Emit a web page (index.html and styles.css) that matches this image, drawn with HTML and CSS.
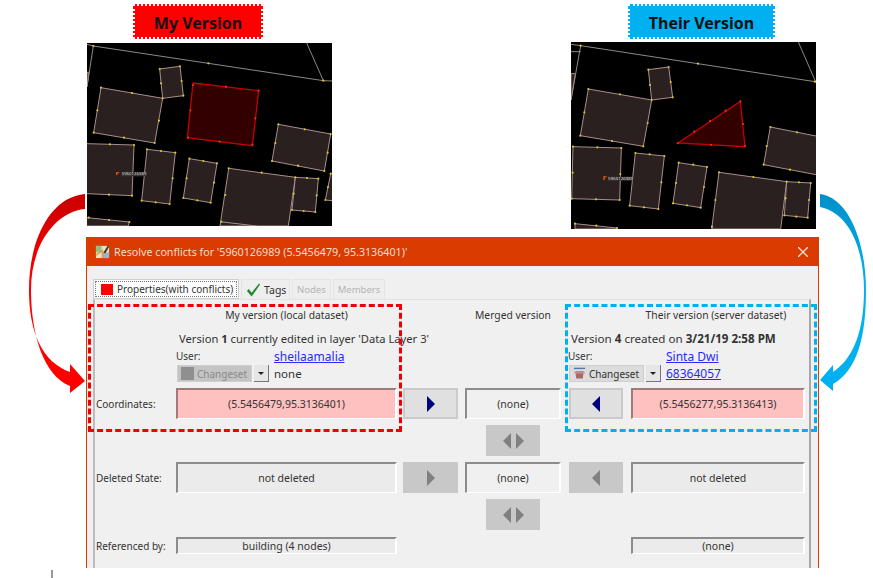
FILE: index.html
```html
<!DOCTYPE html>
<html lang="en">
<head>
<meta charset="UTF-8">
<title>Resolve conflicts</title>
<link rel="stylesheet" href="styles.css">
</head>
<body>

<div class="slide">
  <div class="tag tag-mine">My Version</div>
  <div class="tag tag-their">Their Version</div>

  <svg class="map map-mine" viewBox="21 129 735 549">
    <rect x="21" y="129" width="735" height="549" fill="#000"/>
    <path class="road" d="M21 133L40 138L730 242L756 243M680 129L730 242M40 138L21 260"/>
    <path class="bld" d="M21 217L27 217L21 260Z"/>
    <path class="bld" d="M239 207L300 199L310 287L248 295Z"/>
    <path class="bld" d="M63 263L248 295L224 429L41 398Z"/>
    <path class="bld" d="M595 373L752 402L733 513L576 483Z"/>
    <path class="bld" d="M21 431L162 435L156 587L21 581"/>
    <path class="bld" d="M201 448L286 458L269 612L185 602Z"/>
    <path class="bld" d="M328 476L411 490L392 608L310 594Z"/>
    <path class="bld" d="M446 505L646 532L625 678L420 678Z"/>
    <path class="bld" d="M420 665L530 678"/>
    <path class="bld" d="M646 532L715 536L706 636L636 630Z"/>
    <path class="bld" d="M756 521L752 521L736 600L756 602"/>
    <path class="bld" d="M21 653L148 666L145 678L21 678"/>
    <path class="sel" d="M339 249L536 272L517 437L322 413Z"/>
    <path class="dots" d="M40 138h0M385 190h0M730 242h0M239 207h0M300 199h0M310 287h0M243 250h0M305 243h0M248 295h0M63 263h0M156 279h0M237 362h0M224 429h0M132 413h0M41 398h0M52 331h0M595 373h0M674 388h0M752 402h0M743 458h0M733 513h0M654 497h0M576 483h0M586 429h0M162 435h0M90 433h0M156 587h0M87 584h0M201 448h0M243 453h0M286 458h0M278 535h0M269 612h0M227 607h0M185 602h0M328 476h0M370 483h0M411 490h0M402 548h0M392 608h0M352 601h0M310 594h0M320 535h0M446 505h0M545 518h0M646 532h0M436 585h0M424 665h0M681 534h0M715 536h0M710 586h0M706 636h0M671 633h0M636 630h0M641 581h0M752 521h0M744 561h0M736 600h0M26 653h0M87 660h0M148 666h0"/>
    <path class="dots-red" d="M339 255h0M438 260h0M536 272h0M526 355h0M517 434h0M419 425h0M324 413h0M331 331h0"/>
    <path class="pin" d="M108 517h10v3h-6v5h-4z"/>
    <rect class="pin-bg" x="124" y="517" width="76" height="12"/>
    <text class="map-label" x="125" y="526">5960126989</text>
  </svg>

  <svg class="map map-their" viewBox="33 126 735 561">
    <rect x="33" y="126" width="735" height="561" fill="#000"/>
    <path class="road" d="M33 133L62 137L765 245M715 126L768 248M62 137L33 300M33 155L62 155"/>
    <path class="bld" d="M33 221L46 221L33 300Z"/>
    <path class="bld" d="M265 209L326 201L338 292L275 300Z"/>
    <path class="bld" d="M85 267L275 300L250 439L61 407Z"/>
    <path class="bld" d="M768 408L631 381L611 494L768 524"/>
    <path class="bld" d="M39 440L184 444L179 600L35 596Z"/>
    <path class="bld" d="M226 459L313 468L295 627L209 617Z"/>
    <path class="bld" d="M356 488L441 501L422 623L339 610Z"/>
    <path class="bld" d="M477 517L680 545L662 687L455 687Z"/>
    <path class="bld" d="M680 545L752 549L743 653L673 646Z"/>
    <path class="bld" d="M45 671L171 684L171 687L45 687Z"/>
    <path class="sel" d="M541 304L555 440L354 429Z"/>
    <path class="dots" d="M62 137h0M414 191h0M765 245h0M265 209h0M326 201h0M332 246h0M338 292h0M275 300h0M270 255h0M85 267h0M180 283h0M263 369h0M250 439h0M156 423h0M61 407h0M73 337h0M631 381h0M711 397h0M620 438h0M611 494h0M690 509h0M39 440h0M112 442h0M184 444h0M181 522h0M179 600h0M108 598h0M35 596h0M38 518h0M226 459h0M269 463h0M313 468h0M304 547h0M295 627h0M252 622h0M209 617h0M356 488h0M400 494h0M441 501h0M432 561h0M422 623h0M381 616h0M339 610h0M348 549h0M477 517h0M580 531h0M680 545h0M466 600h0M456 680h0M717 547h0M752 549h0M747 600h0M743 653h0M709 650h0M673 646h0M677 595h0M45 671h0M109 677h0M171 684h0"/>
    <path class="dots-red" d="M541 304h0M549 372h0M555 438h0M453 435h0M354 429h0M403 395h0M450 363h0M497 332h0"/>
    <path class="pin" d="M130 529h10v3h-6v8h-4z"/>
    <rect class="pin-bg" x="144" y="530" width="74" height="12"/>
    <text class="map-label" x="145" y="539">5960126989</text>
  </svg>

  <div class="window">
    <div class="titlebar">
      <svg class="app-icon" viewBox="0 0 16 16">
        <rect x="1" y="2" width="14" height="13" fill="#e8e0c8"/>
        <path d="M1 2h6v7H1z" fill="#8fc08a"/>
        <path d="M7 9h8v6H7z" fill="#8fb8e0"/>
        <path d="M1 12L8 7L9 15" fill="none" stroke="#e8a030" stroke-width="1.5"/>
        <path d="M14 1L9 9L11 10L15 3z" fill="#4a3020"/>
      </svg>
      <span class="title-text">Resolve conflicts for '5960126989 (5.5456479, 95.3136401)'</span>
      <svg class="close-icon" viewBox="0 0 10 10"><path d="M0 0L10 10M10 0L0 10"/></svg>
    </div>

    <div class="tabs">
      <div class="tab tab-active"><div class="tab-inner"><span class="red-square"></span>Properties(with conflicts)</div></div>
      <div class="tab tab-tags">
        <svg class="check" viewBox="0 0 16 14"><path d="M1 8L3 6L6 10L14 0L15 1L6 14Z"/></svg>
        Tags
      </div>
      <div class="tab tab-off">Nodes</div>
      <div class="tab tab-off">Members</div>
    </div>

    <div class="pane">
      <div class="head col-mine">My version (local dataset)</div>
      <div class="head col-merged">Merged version</div>
      <div class="head head-their">Their version (server dataset)</div>

      <div class="version version-mine">Version <b>1</b> currently edited in layer 'Data Layer 3'</div>
      <div class="version version-their">Version <b>4</b> created on <b>3/21/19 2:58 PM</b></div>

      <div class="user user-mine">
        <div class="user-label">User:</div>
        <a class="link link-top" href="#">sheilaamalia</a>
        <div class="combo">
          <span class="combo-btn combo-off"><span class="cs-box"></span>Changeset</span>
          <span class="combo-arrow"></span>
        </div>
        <span class="plain">none</span>
      </div>
      <div class="user user-their">
        <div class="user-label">User:</div>
        <a class="link link-top" href="#">Sinta Dwi</a>
        <div class="combo">
          <span class="combo-btn">
            <svg class="cs-icon" viewBox="0 0 14 14">
              <path d="M1 1.5h12" stroke="#4a78b8" stroke-width="1.5"/>
              <path d="M2.5 4.5h9l-1 8h-7z" fill="#a86868"/>
              <path d="M1.5 5h11v2h-11z" fill="#c89090"/>
            </svg>
            Changeset
          </span>
          <span class="combo-arrow"></span>
        </div>
        <a class="link" href="#">68364057</a>
      </div>

      <div class="label row-coord">Coordinates:</div>
      <div class="field conflict col-mine row-coord">(5.5456479,95.3136401)</div>
      <div class="btn col-b1 row-coord"><span class="tri tri-r"></span></div>
      <div class="field empty col-merged row-coord">(none)</div>
      <div class="btn col-b2 row-coord"><span class="tri tri-l"></span></div>
      <div class="field conflict col-their row-coord">(5.5456277,95.3136413)</div>

      <div class="btn btn-off btn-both col-merged row-both1"><span class="tri tri-l"></span><span class="tri tri-r"></span></div>

      <div class="label row-del">Deleted State:</div>
      <div class="field col-mine row-del">not deleted</div>
      <div class="btn btn-off col-b1 row-del"><span class="tri tri-r"></span></div>
      <div class="field empty col-merged row-del">(none)</div>
      <div class="btn btn-off col-b2 row-del"><span class="tri tri-l"></span></div>
      <div class="field col-their row-del">not deleted</div>

      <div class="btn btn-off btn-both col-merged row-both2"><span class="tri tri-l"></span><span class="tri tri-r"></span></div>

      <div class="label row-ref">Referenced by:</div>
      <div class="field col-mine row-ref">building (4 nodes)</div>
      <div class="field col-their row-ref">(none)</div>
    </div>
  </div>

  <div class="dash dash-mine"></div>
  <div class="dash dash-their"></div>

  <svg class="arrows" viewBox="0 0 873 578">
    <defs>
      <linearGradient id="red-fade" x1="0" y1="0" x2="0" y2="1">
        <stop offset="0" stop-color="#c80000"/>
        <stop offset="0.45" stop-color="#ff0000"/>
      </linearGradient>
      <linearGradient id="blue-fade" x1="0" y1="0" x2="0" y2="1">
        <stop offset="0" stop-color="#0090c8"/>
        <stop offset="0.45" stop-color="#00b0f0"/>
      </linearGradient>
    </defs>
    <path fill="url(#red-fade)" d="M85 194C50 197 29 240 29 290C29 332 42 362 70 372L70 364L85 381L70 393L70 386C44 376 31 335 31 290C31 245 55 212 85 209Z"/>
    <path fill="url(#blue-fade)" d="M820 194C850 198 866 245 866 290C866 335 858 370 833 384L833 391L820 380L833 365L833 372C854 358 864 330 864 290C864 250 850 213 820 207Z"/>
    <path d="M52 570V578" stroke="#333" stroke-width="1"/>
  </svg>
</div>

</body>
</html>
```

FILE: styles.css
```css
* {
  box-sizing: border-box;
}
html, body {
  margin: 0;
  padding: 0;
  background-color: #fff;
}
body {
  font-family: "Noto Sans", sans-serif;
  font-size: 10.5px;
  color: #333;
}
.slide {
  position: relative;
  width: 873px;
  height: 578px;
  overflow: hidden;
}

/* annotation labels */
.tag {
  position: absolute;
  top: 4px;
  height: 35px;
  padding-top: 3px;
  border: 2px dotted #fff;
  display: flex;
  align-items: center;
  justify-content: center;
  font-size: 16px;
  font-weight: 700;
  color: #111;
}
.tag-mine {
  left: 133px;
  width: 130px;
  background-color: #ff0000;
}
.tag-their {
  left: 628px;
  width: 147px;
  background-color: #00b0f0;
}

/* map thumbnails */
.map {
  position: absolute;
  display: block;
  width: 245px;
  filter: blur(0.4px);
}
.map-mine {
  left: 87px;
  top: 43px;
  height: 183px;
}
.map-their {
  left: 571px;
  top: 42px;
  height: 187px;
}
.road {
  fill: none;
  stroke: #a8a3a0;
  stroke-width: 2.5;
}
.bld {
  fill: #2a2020;
  stroke: #a88e8c;
  stroke-width: 3;
}
.sel {
  fill: #330000;
  stroke: #c00000;
  stroke-width: 4;
}
.dots, .dots-red {
  fill: none;
  stroke-linecap: round;
  stroke-width: 6.5;
}
.dots {
  stroke: #d8c820;
}
.dots-red {
  stroke: #f03010;
}
.pin {
  fill: #f06000;
}
.pin-bg {
  fill: #3a3636;
}
.map-label {
  font-size: 13px;
  fill: #c8c8c8;
}

/* dialog */
.window {
  position: absolute;
  left: 86px;
  top: 237px;
  width: 733px;
  height: 331px;
  background-color: #f0f0f0;
  border-left: 1px solid #da3b01;
  border-right: 1px solid #da3b01;
  overflow: hidden;
}
.titlebar {
  height: 29px;
  margin: 0 -1px;
  padding: 0 11px 0 9px;
  background-color: #da3b01;
  color: #f8dccf;
  display: flex;
  align-items: center;
}
.app-icon {
  width: 15px;
  height: 15px;
  margin-right: 4px;
}
.title-text {
  flex: 1;
  font-size: 10.7px;
}
.close-icon {
  width: 10px;
  height: 10px;
  fill: none;
  stroke: #fbe3d8;
  stroke-width: 1.3;
}

.tabs {
  display: flex;
  align-items: flex-end;
  gap: 2px;
  height: 33px;
  padding-left: 6px;
}
.tab {
  height: 20px;
  padding: 0 4px;
  display: flex;
  align-items: center;
  background-color: #eeeeee;
  border: 1px solid #e4e4e4;
  border-bottom: 0;
  font-size: 9.5px;
  white-space: nowrap;
}
.tab-active {
  width: 146px;
  padding: 1px;
  background-color: #fff;
  border: 1px solid #cfcfcf;
  font-size: 10px;
}
.tab-inner {
  flex: 1;
  height: 100%;
  padding-left: 5px;
  display: flex;
  align-items: center;
  border: 1px dotted #777;
}
.red-square {
  width: 12px;
  height: 11px;
  margin-right: 4px;
  background-color: #ff0000;
}
.tab-tags {
  width: 49px;
  gap: 3px;
  font-size: 10.5px;
}
.check {
  flex: none;
  width: 15px;
  height: 14px;
  fill: #1c8a28;
}
.tab-off {
  color: #b4b4b4;
}

.pane {
  margin: 0 7px 0 6px;
  height: 269px;
  padding: 6px 0 0 1px;
  border-top: 1px solid #e2e2e2;
  border-left: 2px solid #bcbcbc;
  border-right: 2px solid #a8a8a8;
  display: grid;
  grid-template-columns: 80px 221px 68px 96px 70px 174px;
  grid-template-rows: 18px 16px 30px 31px 31px 31px 31px 18px;
  row-gap: 6px;
}
.col-mine { grid-column: 2; }
.col-b1 { grid-column: 3; }
.col-merged { grid-column: 4; }
.col-b2 { grid-column: 5; }
.col-their { grid-column: 6; }
.row-coord { grid-row: 4; }
.row-both1 { grid-row: 5; }
.row-del { grid-row: 6; }
.row-both2 { grid-row: 7; }
.row-ref { grid-row: 8; }

.head {
  grid-row: 1;
  font-size: 10.3px;
  text-align: center;
  line-height: 18px;
  white-space: nowrap;
}
.head-their {
  grid-column: 5 / 7;
  padding-left: 66px;
}
.version {
  grid-row: 2;
  padding-top: 1px;
  line-height: 16px;
  white-space: nowrap;
}
.version-mine {
  grid-column: 2 / 5;
  padding-left: 3px;
  font-size: 11.2px;
}
.version-their {
  grid-column: 5 / 7;
  padding-left: 10px;
  font-size: 11.6px;
}
.user {
  grid-row: 3;
  display: grid;
  grid-template-columns: 98px auto;
  grid-template-rows: 13px 17px;
  align-items: center;
  white-space: nowrap;
}
.user-mine {
  grid-column: 2;
}
.user-their {
  grid-column: 5 / 7;
  margin-left: 7px;
}
.user-label {
  align-self: start;
  font-size: 10px;
  line-height: 8px;
}
.link {
  color: #2a2aff;
  font-size: 12px;
}
.link-top {
  align-self: start;
  line-height: 10px;
}
.plain {
  font-size: 11.5px;
}
.combo {
  display: flex;
  align-items: stretch;
  height: 17px;
  padding-left: 1px;
  gap: 2px;
  font-size: 10px;
}
.combo-btn {
  width: 75px;
  display: flex;
  align-items: center;
  gap: 3px;
  padding-left: 3px;
  background-color: #dcdcdc;
  border: 1px solid #cfcfcf;
}
.combo-off {
  background-color: #c4c4c4;
  color: #8a8a8a;
}
.cs-box {
  width: 13px;
  height: 13px;
  background-color: #8f8f8f;
}
.cs-icon {
  flex: none;
  width: 13px;
  height: 13px;
}
.combo-arrow {
  width: 15px;
  position: relative;
  background-color: #e6e6e6;
  border-right: 1px solid #777;
  border-bottom: 1px solid #777;
}
.combo-arrow::after {
  content: "";
  position: absolute;
  left: 4px;
  top: 7px;
  border-left: 3px solid transparent;
  border-right: 3px solid transparent;
  border-top: 3px solid #222;
}

.label {
  grid-column: 1;
  font-size: 10px;
  display: flex;
  align-items: center;
  white-space: nowrap;
}
.field {
  display: flex;
  align-items: center;
  justify-content: center;
  background-color: #ebebeb;
  border-top: 2px solid #8c8c8c;
  border-left: 2px solid #8c8c8c;
  border-right: 2px solid #fff;
  border-bottom: 1px solid #fff;
}
.conflict {
  background-color: #ffc0c0;
  border-top-color: #a07a7a;
  border-left-color: #a07a7a;
}
.empty {
  background-color: #f0f0f0;
}
.row-ref {
  margin-top: 1px;
}

.btn {
  display: flex;
  align-items: center;
  justify-content: center;
  gap: 5px;
  background-color: #e0e0e0;
  border: 2px solid #cacaca;
}
.col-b1.btn {
  margin: 0 7px 0 6px;
}
.col-b2.btn {
  margin: 0 8px;
}
.btn-off {
  background-color: #c8c8c8;
  border-color: #c8c8c8;
}
.btn-both {
  width: 54px;
  justify-self: center;
}
.tri {
  width: 0;
  height: 0;
  border-top: 8px solid transparent;
  border-bottom: 8px solid transparent;
}
.tri-r {
  border-left: 8px solid #000080;
}
.tri-l {
  border-right: 8px solid #000080;
}
.btn-off .tri-r {
  border-left-color: #808080;
}
.btn-off .tri-l {
  border-right-color: #808080;
}

/* dashed highlight boxes drawn over the dialog */
.dash {
  position: absolute;
  top: 304px;
  height: 128px;
  border: 3px dashed;
}
.dash-mine {
  left: 88px;
  width: 314px;
  border-color: #f00000;
}
.dash-their {
  left: 565px;
  width: 252px;
  border-color: #00b0f0;
}
.arrows {
  position: absolute;
  left: 0;
  top: 0;
  width: 873px;
  height: 578px;
  pointer-events: none;
}
```
